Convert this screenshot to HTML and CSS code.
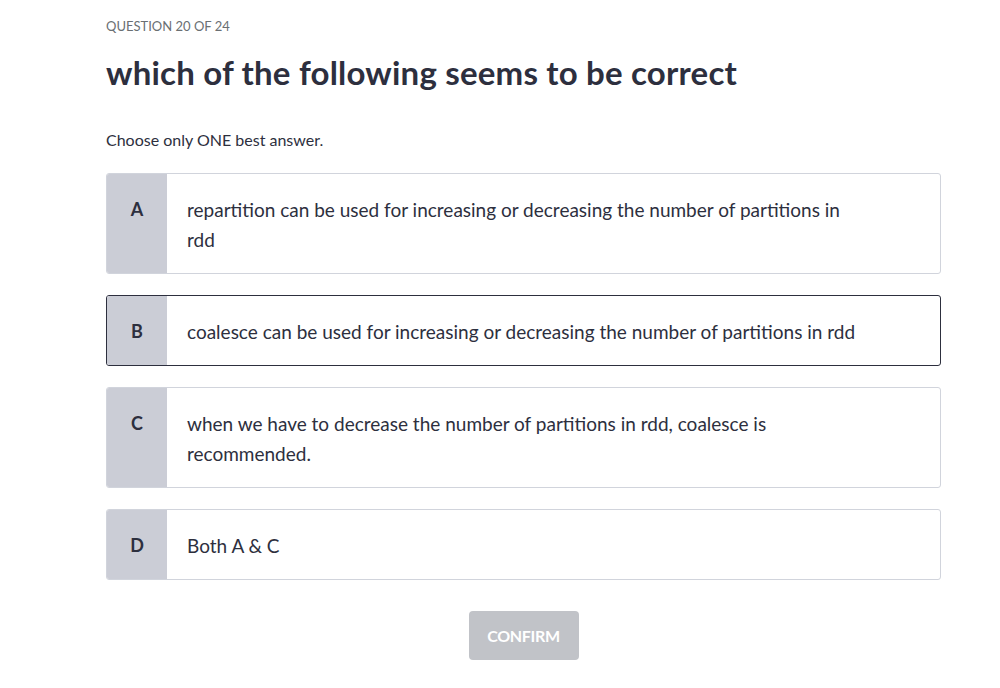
FILE: index.html
```html
<!DOCTYPE html>
<html lang="en">
<head>
<meta charset="utf-8">
<title>Question 20 of 24</title>
<link rel="stylesheet" href="styles.css">
</head>
<body>
<main class="quiz">
  <div class="counter">QUESTION 20 OF 24</div>
  <h1 class="question">which of the following seems to be correct</h1>
  <p class="hint">Choose only ONE best answer.</p>
  <ul class="options">
    <li class="option">
      <span class="letter">A</span>
      <span class="text">repartition can be used for increasing or decreasing the number of partitions in rdd</span>
    </li>
    <li class="option selected">
      <span class="letter">B</span>
      <span class="text">coalesce can be used for increasing or decreasing the number of partitions in rdd</span>
    </li>
    <li class="option">
      <span class="letter">C</span>
      <span class="text">when we have to decrease the number of partitions in rdd, coalesce is recommended.</span>
    </li>
    <li class="option">
      <span class="letter">D</span>
      <span class="text">Both A &amp; C</span>
    </li>
  </ul>
  <div class="actions">
    <button class="confirm" disabled>CONFIRM</button>
  </div>
</main>
</body>
</html>
```
FILE: styles.css
```css
* { box-sizing: border-box; }
html, body { margin: 0; background: #fff; }
body {
  font-family: "Source Sans Pro", Lato, "Liberation Sans", sans-serif;
  color: #2d2f3e;
}
.quiz {
  width: 835px;
  margin-left: 106px;
  padding-top: 18px;
}
.counter {
  font-size: 13px;
  line-height: 16px;
  color: #6a6f73;
}
.question {
  margin: 18px 0 0;
  font-size: 33px;
  line-height: 40px;
  font-weight: 700;
  color: #2d2f3e;
  letter-spacing: 0.2px;
}
.hint {
  margin: 37px 0 0;
  font-size: 16px;
  line-height: 22px;
  color: #2d2f3e;
}
.options {
  list-style: none;
  margin: 22px 0 0;
  padding: 0;
  display: flex;
  flex-direction: column;
  gap: 21px;
}
.option {
  display: flex;
  border: 1px solid #d1d4dc;
  border-radius: 3px;
  overflow: hidden;
  background: #fff;
}
.option.selected { border-color: #2d2f3e; }
.letter {
  flex: 0 0 60px;
  background: #cbcdd6;
  display: flex;
  justify-content: center;
  padding-top: 20px;
  font-weight: 700;
  font-size: 18px;
  line-height: 30px;
  color: #2d2f3e;
}
.text {
  flex: 1;
  padding: 21px 80px 18px 20px;
  font-size: 19px;
  line-height: 30px;
  color: #2d2f3e;
}
.actions {
  display: flex;
  justify-content: center;
  margin-top: 31px;
}
.confirm {
  width: 110px;
  height: 49px;
  border: 0;
  border-radius: 4px;
  background: #c1c3c8;
  color: #fff;
  font-family: inherit;
  font-weight: 700;
  font-size: 16px;
  letter-spacing: -0.3px;
}
```
